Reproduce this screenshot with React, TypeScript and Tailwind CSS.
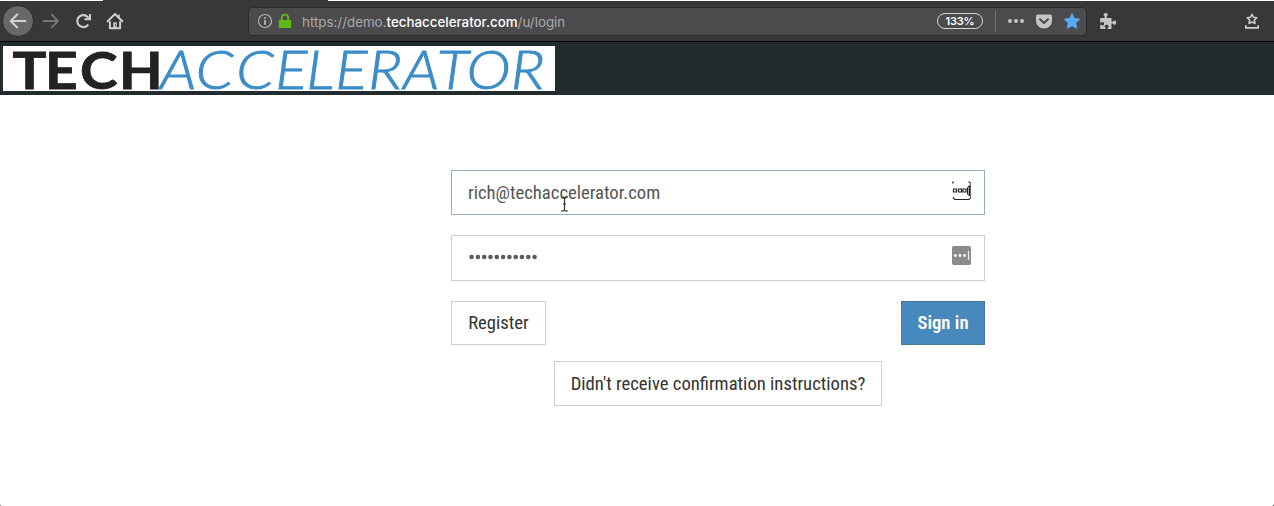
import React from "react";

const condensed = "font-['Roboto_Condensed','Roboto',sans-serif] [font-stretch:75%] text-[18.66px] leading-[24px]";

function BackIcon() {
  return (
    <svg width="32" height="32" viewBox="0 0 32 32" fill="none">
      <circle cx="16" cy="16" r="15.5" fill="#68686b" stroke="#2c2c2e" />
      <path d="M23.5 16H9M15.2 9.5L8.7 16l6.5 6.5" stroke="#d2d2d3" strokeWidth="2" strokeLinecap="round" strokeLinejoin="round" />
    </svg>
  );
}

function ForwardIcon() {
  return (
    <svg width="18" height="18" viewBox="0 0 18 18" fill="none">
      <path d="M1.5 9H16M9.7 2.7L16 9l-6.3 6.3" stroke="#77777a" strokeWidth="1.8" strokeLinecap="round" strokeLinejoin="round" />
    </svg>
  );
}

function ReloadIcon() {
  return (
    <svg width="18" height="18" viewBox="0 0 18 18" fill="none">
      <path d="M12.7 13.2A6 6 0 1 1 13 5.4" stroke="#cfcfd0" strokeWidth="2.1" strokeLinecap="round" />
      <path d="M15 2v5.300H9.500" stroke="#cfcfd0" strokeWidth="2" />
    </svg>
  );
}

function HomeIcon() {
  return (
    <svg width="18" height="18" viewBox="0 0 18 18" fill="none">
      <path d="M1.7 9.3L9 2l7.3 7.3" stroke="#cfcfd0" strokeWidth="2" strokeLinecap="round" strokeLinejoin="round" />
      <path d="M3.9 9.2v7.1h10.2V9.2" stroke="#cfcfd0" strokeWidth="2" strokeLinejoin="round" />
      <path d="M7.3 16V10.3h3.4V16z" fill="#cfcfd0" />
      <path d="M9 12.6h1v1.4H9z" fill="#38383a" />
      <path d="M13 2.5v3.4" stroke="#cfcfd0" strokeWidth="1.6" />
    </svg>
  );
}

function InfoIcon() {
  return (
    <svg width="16" height="16" viewBox="0 0 16 16" fill="none">
      <circle cx="8" cy="8" r="6.500" stroke="#b9b9bb" strokeWidth="1.1" />
      <circle cx="8" cy="4.9" r="0.95" fill="#c4c4c6" />
      <path d="M8 7v4.7" stroke="#c4c4c6" strokeWidth="1.6" />
    </svg>
  );
}

function LockIcon() {
  return (
    <svg width="14" height="16" viewBox="0 0 14 16" fill="none">
      <path d="M3.8 8V4.8a3.2 3.2 0 0 1 6.4 0V8" stroke="#5fb916" strokeWidth="1.9" />
      <rect x="0.8" y="7" width="12.4" height="8" rx="1" fill="#5fb916" />
    </svg>
  );
}

function PocketIcon() {
  return (
    <svg width="16" height="15" viewBox="0 0 16 15" fill="none">
      <path d="M2 .5h12A2 2 0 0 1 16 2.4V7a8 7.5 0 0 1-16 0V2.400A2 2 0 0 1 2 .5z" fill="#c5c5c6" />
      <path d="M4 5.200l4 3.800 4-3.800" stroke="#4b4b4e" strokeWidth="2" strokeLinecap="round" strokeLinejoin="round" />
    </svg>
  );
}

function StarIcon() {
  return (
    <svg width="18" height="18" viewBox="0 0 18 18">
      <path d="M9 1.600l2.300 4.900 5.300.7-3.900 3.700 1 5.400L9 13.700l-4.700 2.600 1-5.400L1.400 7.200l5.300-.7z" fill="#55adf6" stroke="#55adf6" strokeWidth="1" strokeLinejoin="round" />
    </svg>
  );
}

function PuzzleIcon() {
  return (
    <svg width="18" height="18" viewBox="0 0 18 18">
      <path d="M1.200 6h4.500V4.500C4.800 4 4.400 3.300 4.600 2.500c.5-2 3.600-2 4.200 0 .2.800-.2 1.500-1.100 2V6h4.800v3.800h1.300c.4-1 1.200-1.400 2-1.200 1.900.5 1.900 3.700 0 4.200-.8.200-1.600-.2-2-1.200h-1.300V17H8.700v-1.400c.8-.4 1.100-1 .9-1.700-.5-1.500-3.400-1.500-3.900 0-.2.700.1 1.300.9 1.700V17H1.200v-4.200h1.200c.5.7 1.100.9 1.700.7 1.300-.5 1.300-3.200 0-3.600-.6-.2-1.200.1-1.700.8H1.200z" fill="#c5c5c6" />
    </svg>
  );
}

function LibraryStarIcon() {
  return (
    <svg width="16" height="18" viewBox="0 0 16 18" fill="none">
      <path d="M8 2.200l1.450 3.100 3.400.4-2.500 2.400.65 3.400L8 9.900l-3 1.600.65-3.400-2.500-2.400 3.400-.4z" stroke="#cfcfd0" strokeWidth="1.500" strokeLinejoin="round" />
      <path d="M1.800 13.300v2.600h12.400v-2.600" stroke="#cfcfd0" strokeWidth="1.700" strokeLinejoin="round" />
    </svg>
  );
}

function Logo() {
  return (
    <svg width="552" height="45" viewBox="0 0 552 45" className="block overflow-visible bg-white">
      <text transform="scale(1.08 1)" x="8.8 38.9 71.4 107.4" y="43" fill="#242122" className="font-['Lato',sans-serif] text-[52.500px] leading-none font-bold" stroke="#242122" strokeWidth="0.8">TECH</text>
      <text transform="scale(1.14 1)" x="137.7 169 204.6 238.800 266 291.400 320.400 350.800 380.400 406.500 445.500" y="43" fill="#3c8dc8" stroke="#3c8dc8" strokeWidth="0.9" className="font-['Lato',sans-serif] text-[52.500px] leading-none font-light italic">ACCELERATOR</text>
    </svg>
  );
}

function KeyFieldIcon({ outlined = false }: { outlined?: boolean }) {
  return outlined ? (
    <svg width="20" height="20" viewBox="0 0 20 20" fill="none">
      <path d="M.8 2.500V1.500L1.800.8M16.500.8l2 1M.8 16.500l2 2h14l1.500-1" stroke="#222" strokeWidth="1.200" />
      <path d="M18.500 1v17" stroke="#666" strokeWidth="1" />
      <path d="M1.500 8h3v3h-3zM6.500 8h3v3h-3zM11 8h3v3h-3z" stroke="#222" strokeWidth="1.200" />
      <path d="M17.500 4.500l-2 2v6.500l2 2z" fill="#aaa" stroke="#222" />
    </svg>
  ) : (
    <svg width="20" height="20" viewBox="0 0 20 20">
      <rect x="0" y="0" width="19" height="19" rx="1.800" fill="#8b8b8b" />
      <circle cx="3.300" cy="9.500" r="1.400" fill="#fff" />
      <circle cx="8" cy="9.500" r="1.400" fill="#fff" />
      <circle cx="12.600" cy="9.500" r="1.400" fill="#fff" />
      <path d="M16.500 5v9" stroke="#eee" strokeWidth="1.200" />
    </svg>
  );
}

function Toolbar() {
  return (
    <div className="flex h-[42px] flex-col border-b border-black bg-[#38383a]">
      <div className="flex h-px shrink-0 justify-between">
        <div className="w-[103px] bg-white" />
        <div className="w-[946px] bg-white" />
      </div>
      <div className="flex flex-1 items-center pl-[2px] pr-[14px]">
        <BackIcon />
        <div className="ml-2"><ForwardIcon /></div>
        <div className="ml-[15px]"><ReloadIcon /></div>
        <div className="ml-[13px]"><HomeIcon /></div>
        <div className="ml-[124px] flex h-[29px] w-[839px] items-center rounded-[4px] border border-[#2c2c2e] bg-[#4b4b4e] pl-[8px] pr-[5px]">
          <InfoIcon />
          <div className="ml-[5px]"><LockIcon /></div>
          <div className="ml-[10px] mt-[2px] whitespace-nowrap font-['Inter',sans-serif] text-[13.35px] leading-[18px] text-[#a9a9ab]">
            https://demo.<span className="font-medium text-white">techaccelerator.com</span>/u/login
          </div>
          <div className="ml-auto flex h-4 w-[46px] items-center justify-center rounded-full border border-[#d5d5d6] font-['Inter',sans-serif] text-[11px] font-semibold tracking-[-0.2px] text-white">133%</div>
          <div className="ml-3 h-[22px] w-px bg-[#6b737a]" />
          <div className="ml-3 flex gap-[2px]">
            <span className="size-1 rounded-full bg-[#c5c5c6]" />
            <span className="size-1 rounded-full bg-[#c5c5c6]" />
            <span className="size-1 rounded-full bg-[#c5c5c6]" />
          </div>
          <div className="ml-3"><PocketIcon /></div>
          <div className="ml-[11px]"><StarIcon /></div>
        </div>
        <div className="ml-3"><PuzzleIcon /></div>
        <div className="ml-auto"><LibraryStarIcon /></div>
      </div>
    </div>
  );
}

export default function App() {
  return (
    <div className="bg-[#555]">
      <div className="h-[506px] w-[1274px] overflow-hidden rounded-b-[2px] bg-white">
        <Toolbar />
        <header className="h-[53px] bg-[#222b2e] pl-[3px] pt-1">
          <Logo />
        </header>
        <main className="ml-[451px] flex w-[534px] flex-col pt-[75px]">
          <div className="relative flex h-[45px] items-center justify-between border border-[#94b0bf] pl-[16px] pr-[12px]">
            <span className={`${condensed} text-[#555]`}>rich@techaccelerator.com</span>
            <div className="-mt-[3px]"><KeyFieldIcon outlined /></div>
            <svg width="9" height="16" viewBox="0 0 9 16" fill="none" className="absolute left-[108px] top-[25px]">
              <path d="M1 1h2.500L4.500 2l1-1H8M1 15h2.500l1-1 1 1H8M4.500 2v12M3 8h3" stroke="#333" strokeWidth="1.200" />
            </svg>
          </div>
          <div className="mt-5 flex h-[46px] items-center justify-between border border-[#cfcfcf] pl-[17px] pr-[12px]">
            <svg width="70" height="6" viewBox="0 0 70 6" className="-mt-[2px]" fill="#5c5c5c">
              {Array.from({ length: 11 }, (_, i) => (
                <circle key={i} cx={2.6 + i * 6.3} cy="3" r="2.300" />
              ))}
            </svg>
            <div className="-mt-[4px]"><KeyFieldIcon /></div>
          </div>
          <div className="mt-5 flex h-11 justify-between">
            <button className={`${condensed} w-[95px] whitespace-nowrap border border-[#cfcfcf] text-[#333]`}>Register</button>
            <button className={`${condensed} w-[84px] whitespace-nowrap border border-[#4c7895] bg-[#4788bd] font-semibold text-white`}>Sign in</button>
          </div>
          <button className={`${condensed} mt-4 h-[45px] w-[328px] self-center whitespace-nowrap border border-[#cfcfcf] text-[#333]`}>Didn't receive confirmation instructions?</button>
        </main>
      </div>
    </div>
  );
}
